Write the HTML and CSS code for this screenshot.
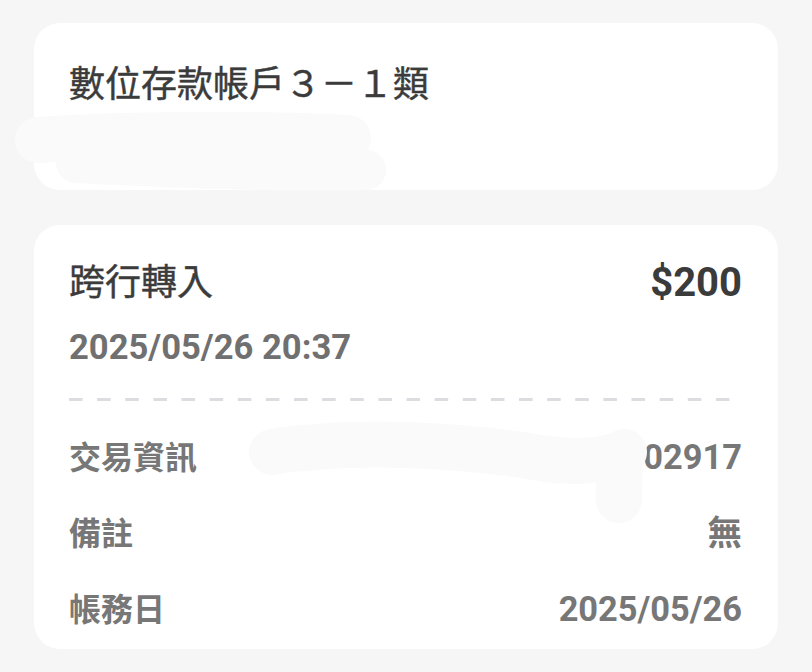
FILE: index.html
```html
<!DOCTYPE html>
<html lang="zh-Hant">
<head>
<meta charset="utf-8">
<title>交易明細</title>
<link rel="stylesheet" href="styles.css">
</head>
<body>
<main class="page">
  <section class="card card-account">
    <h1 class="account-name">數位存款帳戶３－１類</h1>
    <div class="account-no"></div>
  </section>

  <section class="card card-detail">
    <div class="head-row">
      <span class="txn-type">跨行轉入</span>
      <span class="amount">$200</span>
    </div>
    <div class="txn-time">2025/05/26 20:37</div>
    <div class="divider"></div>
    <dl class="info-list">
      <div class="info-row">
        <dt>交易資訊</dt>
        <dd>02917</dd>
      </div>
      <div class="info-row">
        <dt>備註</dt>
        <dd>無</dd>
      </div>
      <div class="info-row">
        <dt>帳務日</dt>
        <dd>2025/05/26</dd>
      </div>
    </dl>
  </section>

  <svg class="smudge" width="812" height="672" viewBox="0 0 812 672" aria-hidden="true">
    <g fill="none" stroke="#fafafa" stroke-linecap="round" stroke-linejoin="round">
      <path d="M38 140 C 120 134, 250 133, 348 138" stroke-width="46"/>
      <path d="M76 163 C 180 169, 280 171, 366 170" stroke-width="40"/>
      <path d="M272 452 C 360 438, 470 446, 540 458 C 580 464, 610 460, 624 452" stroke-width="46"/>
      <path d="M620 458 L 619 500" stroke-width="46"/>
    </g>
  </svg>
</main>
</body>
</html>
```

FILE: styles.css
```css
html, body {
  margin: 0;
  padding: 0;
}

body {
  background: #f6f6f6;
  font-family: Roboto, "Noto Sans CJK TC", "Noto Sans", sans-serif;
  color: #3b3b3b;
}

.page {
  position: relative;
  width: 812px;
  height: 672px;
  box-sizing: border-box;
  padding: 23px 34px 0 34px;
  display: flex;
  flex-direction: column;
  gap: 35px;
  overflow: hidden;
}

.card {
  background: #ffffff;
  border-radius: 26px;
  box-sizing: border-box;
}

.card-account {
  height: 167px;
  padding: 36px 35px 0 35px;
}

.account-name {
  margin: 0;
  font-size: 36px;
  line-height: 44px;
  font-weight: 400;
  -webkit-text-stroke: 0.45px #3b3b3b;
  color: #3b3b3b;
  font-family: "Noto Sans CJK TC", sans-serif;
}

.account-no {
  height: 40px;
  margin-top: 14px;
}

.card-detail {
  height: 424px;
  padding: 36px 36px 0 35px;
  display: flex;
  flex-direction: column;
}

.head-row {
  display: flex;
  justify-content: space-between;
  align-items: center;
  height: 44px;
}

.txn-type {
  font-size: 36px;
  line-height: 44px;
  font-weight: 400;
  -webkit-text-stroke: 0.45px #3b3b3b;
  color: #3b3b3b;
}

.amount {
  font-size: 40px;
  line-height: 44px;
  font-weight: 700;
  color: #3b3b3b;
}

.txn-time {
  margin-top: 22px;
  font-size: 34.6px;
  line-height: 40px;
  font-weight: 700;
  color: #707070;
}

.divider {
  margin-top: 31px;
  width: 661px;
  height: 3px;
  background-image: linear-gradient(to right, #dcdde1 0, #dcdde1 14px, transparent 14px);
  background-size: 28.13px 3px;
  background-repeat: repeat-x;
}

.info-list {
  margin: 36px 0 0 0;
  display: flex;
  flex-direction: column;
  gap: 35px;
}

.info-row {
  display: flex;
  justify-content: space-between;
  align-items: baseline;
}

.info-row dt {
  font-size: 32px;
  line-height: 40px;
  font-weight: 700;
  color: #777777;
}

.info-row dd {
  margin: 0;
  font-size: 34.4px;
  line-height: 40px;
  font-weight: 700;
  color: #777777;
}

.smudge {
  position: absolute;
  left: 0;
  top: 0;
  pointer-events: none;
}
```
